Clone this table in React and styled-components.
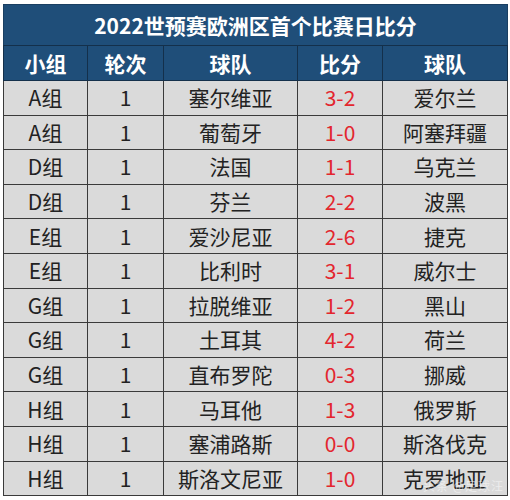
import styled, { createGlobalStyle } from "styled-components";

const GlobalStyle = createGlobalStyle`
  html, body {
    margin: 0;
    padding: 0;
    background: #ffffff;
  }
  body {
    font-family: "Noto Sans CJK SC", "Noto Sans", sans-serif;
  }
`;

const rows = [
  ["A组", "1", "塞尔维亚", "3-2", "爱尔兰"],
  ["A组", "1", "葡萄牙", "1-0", "阿塞拜疆"],
  ["D组", "1", "法国", "1-1", "乌克兰"],
  ["D组", "1", "芬兰", "2-2", "波黑"],
  ["E组", "1", "爱沙尼亚", "2-6", "捷克"],
  ["E组", "1", "比利时", "3-1", "威尔士"],
  ["G组", "1", "拉脱维亚", "1-2", "黑山"],
  ["G组", "1", "土耳其", "4-2", "荷兰"],
  ["G组", "1", "直布罗陀", "0-3", "挪威"],
  ["H组", "1", "马耳他", "1-3", "俄罗斯"],
  ["H组", "1", "塞浦路斯", "0-0", "斯洛伐克"],
  ["H组", "1", "斯洛文尼亚", "1-0", "克罗地亚"],
];

const cols = [84, 76, 134, 85, 125];

const Page = styled.div`
  position: relative;
  width: 510px;
  height: 500px;
  padding: 4px 3px 0 3px;
  box-sizing: border-box;
  overflow: hidden;
`;

const Table = styled.table`
  border-collapse: collapse;
  table-layout: fixed;
  width: 504px;
`;

const TitleCell = styled.th`
  height: 40px;
  background: #1f4e79;
  color: #ffffff;
  font-size: 21px;
  font-weight: 700;
  text-align: center;
  padding: 0;
  border: 1px solid #1a3f62;
  border-bottom: 1px solid #14304b;
`;

const HeadCell = styled.th`
  height: 34px;
  background: #1f4e79;
  color: #ffffff;
  font-size: 21px;
  font-weight: 700;
  text-align: center;
  padding: 0;
  border: 1px solid #14304b;
  line-height: 1;
`;

const Cell = styled.td`
  height: 33.6px;
  background: #dadada;
  color: ${({ $red }) => ($red ? "#e3262e" : "#222222")};
  font-size: 21px;
  line-height: 1;
  text-align: center;
  padding: 0;
  border: 1px solid #3a3a3a;
  white-space: nowrap;
`;

const Watermark = styled.div`
  position: absolute;
  right: 6px;
  bottom: 6px;
  font-size: 12px;
  color: rgba(255, 255, 255, 0.5);
  letter-spacing: 1px;
`;

export default function App() {
  return (
    <Page>
      <GlobalStyle />
      <Table>
        <colgroup>
          {cols.map((w, i) => (
            <col key={i} style={{ width: w }} />
          ))}
        </colgroup>
        <thead>
          <tr>
            <TitleCell colSpan={5}>2022世预赛欧洲区首个比赛日比分</TitleCell>
          </tr>
          <tr>
            <HeadCell>小组</HeadCell>
            <HeadCell>轮次</HeadCell>
            <HeadCell>球队</HeadCell>
            <HeadCell>比分</HeadCell>
            <HeadCell>球队</HeadCell>
          </tr>
        </thead>
        <tbody>
          {rows.map((r, i) => (
            <tr key={i}>
              {r.map((v, j) => (
                <Cell key={j} $red={j === 3}>
                  {v}
                </Cell>
              ))}
            </tr>
          ))}
        </tbody>
      </Table>
      <Watermark>头条 @足球汪</Watermark>
    </Page>
  );
}
